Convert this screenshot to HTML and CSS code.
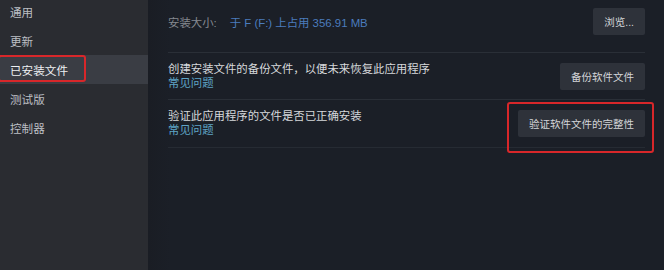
FILE: index.html
```html
<!DOCTYPE html>
<html lang="zh-CN">
<head>
<meta charset="utf-8">
<link rel="stylesheet" href="styles.css">
</head>
<body>
<div class="app">
  <nav class="sidebar">
    <div class="nav-item">通用</div>
    <div class="nav-item">更新</div>
    <div class="nav-item active">已安装文件</div>
    <div class="nav-item">测试版</div>
    <div class="nav-item">控制器</div>
  </nav>
  <main class="content">
    <div class="row row-size">
      <div class="size-info">
        <span class="label">安装大小:</span>
        <span class="value">于 F (F:) 上占用 356.91 MB</span>
      </div>
      <button class="btn">浏览...</button>
    </div>
    <div class="row row-backup">
      <div class="desc">
        <div class="desc-text">创建安装文件的备份文件，以便未来恢复此应用程序</div>
        <div class="faq">常见问题</div>
      </div>
      <button class="btn">备份软件文件</button>
    </div>
    <div class="row row-verify">
      <div class="desc">
        <div class="desc-text">验证此应用程序的文件是否已正确安装</div>
        <div class="faq">常见问题</div>
      </div>
      <div class="highlight-wrap">
        <button class="btn">验证软件文件的完整性</button>
      </div>
    </div>
  </main>
</div>
</body>
</html>
```
FILE: styles.css
```css
html, body {
  margin: 0;
  padding: 0;
  background: #1b1f26;
  overflow: hidden;
}
body {
  font-family: "Liberation Sans", "Noto Sans CJK SC", sans-serif;
  font-size: 11.4px;
}
.app {
  display: flex;
  width: 664px;
  height: 270px;
}
.sidebar {
  width: 148px;
  flex: none;
  background: #2a2c31;
  padding-top: 0;
}
.nav-item {
  height: 29px;
  display: flex;
  align-items: center;
  padding-left: 10px;
  color: #bcbfc4;
  font-size: 11.6px;
}
.nav-item:first-child {
  margin-top: -3px;
}
.nav-item.active {
  background: #3a3d44;
  color: #eef0f2;
  position: relative;
}
.nav-item.active::after {
  content: "";
  position: absolute;
  left: -2px;
  top: 0px;
  width: 84px;
  height: 23px;
  border: 2px solid #d8272a;
  border-radius: 3px;
}
.content {
  flex: 1;
  padding: 0 19px 0 20px;
  background: linear-gradient(90deg, #1a1d24 0px, #1b1f27 22px);
}
.row {
  display: flex;
  align-items: center;
  justify-content: space-between;
  border-bottom: 1px solid #2a2f37;
}
.row-size {
  padding: 8px 0 17px;
}
.row-backup {
  padding: 9px 0 9px;
}
.row-verify {
  padding: 9px 0 10px;
  border-bottom-color: #262b33;
}
.size-info {
  display: flex;
  gap: 13px;
}
.label {
  color: #858990;
}
.value {
  color: #4b7cbd;
}
.desc {
  display: flex;
  flex-direction: column;
}
.desc-text {
  color: #d6d8db;
  line-height: 14px;
}
.faq {
  color: #5ea4c6;
  line-height: 14px;
}
.btn {
  height: 27px;
  padding: 0 11px;
  border: none;
  border-radius: 2px;
  background: #2e323a;
  color: #d3d5d8;
  font-family: "Liberation Sans", "Noto Sans CJK SC", sans-serif;
  font-size: 10.5px;
}
.highlight-wrap {
  position: relative;
  display: flex;
}
.highlight-wrap::after {
  content: "";
  position: absolute;
  left: -11px;
  top: -8px;
  right: -9px;
  bottom: -16px;
  border: 2px solid #d8272a;
  border-radius: 3px;
}
```
